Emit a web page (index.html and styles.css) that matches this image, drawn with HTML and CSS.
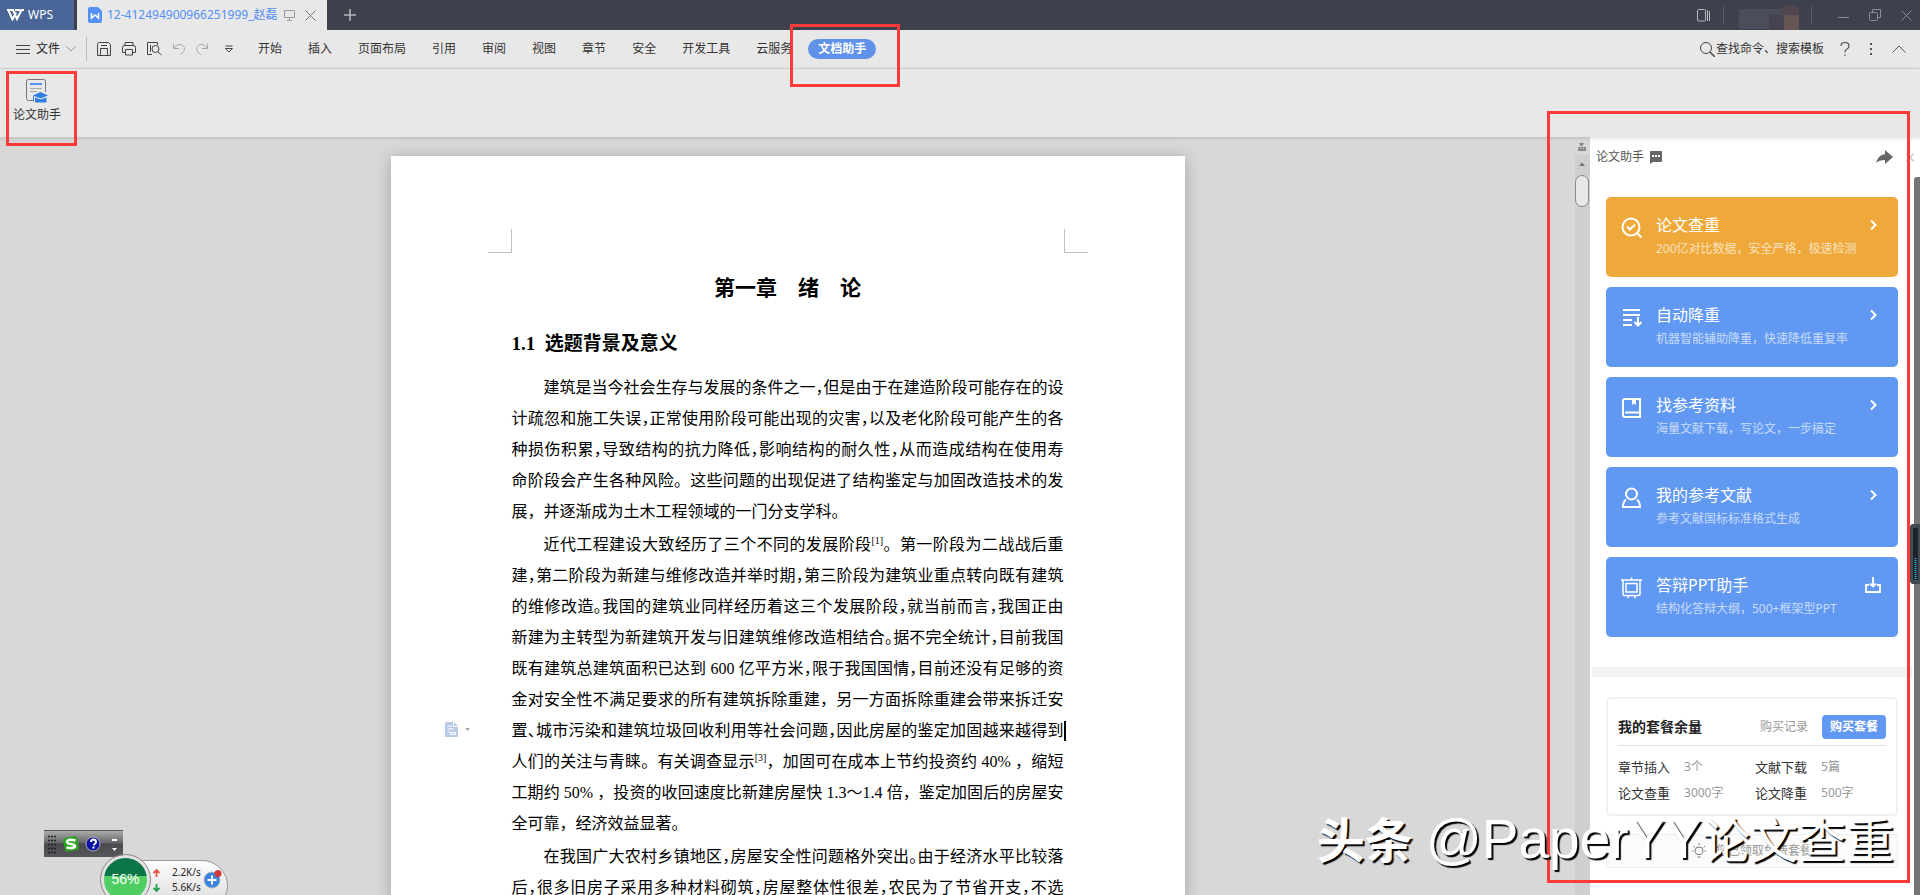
FILE: index.html
```html
<!DOCTYPE html>
<html lang="zh-CN">
<head>
<meta charset="utf-8">
<title>WPS 论文助手</title>
<link rel="stylesheet" href="styles.css">
</head>
<body>
<header class="titlebar">
  <button class="brand"><svg width="17" height="12" viewBox="0 0 17 12" fill="none" stroke="#fff" stroke-width="2"><path d="M0 1h6l4 9 4.500-9H17M1.500 1.500 5.500 10.500 9 3.500M8 1h5"/></svg>WPS</button>
  <div class="doctab">
    <svg width="14" height="16" viewBox="0 0 14 16"><path d="M2 0h8l4 4v10a2 2 0 0 1-2 2H2a2 2 0 0 1-2-2V2a2 2 0 0 1 2-2z" fill="#5490f5"/><path d="M3.500 6v5L7 8l3.500 3V6" fill="none" stroke="#fff" stroke-width="1.500"/></svg>
    <span class="docname">12-412494900966251999_赵磊</span>
    <svg class="monitor" width="11" height="12" viewBox="0 0 11 12" fill="none" stroke="#999"><path d="M.5 1.500h10v7H.5zM5.500 8.500v3M3 11.500h5"/></svg>
    <button class="icon" aria-label="关闭标签"><svg width="11" height="11" viewBox="0 0 11 11" stroke="#777"><path d="M.5.500l10 10M10.500.500l-10 10"/></svg></button>
  </div>
  <button class="icon newtab" aria-label="新建"><svg width="12" height="12" viewBox="0 0 12 12" stroke="#b5b7bd" stroke-width="1.500"><path d="M6 0v12M0 6h12"/></svg></button>
  <div class="window">
    <svg width="14" height="13" viewBox="0 0 14 13" fill="none" stroke="#b9bbc0"><rect x=".5" y=".5" width="8" height="11.500" rx="1"/><path d="M10.500 1v11M12.500 2v10"/></svg>
    <i class="sep"></i>
    <svg class="avatar" width="60" height="30" viewBox="0 0 60 30"><path d="M0 9h43v20H0z" fill="#4c4d5c"/><path d="M30 14h15v16H30z" fill="#474250"/><path d="M42 8q8-7 18 0v7H42z" fill="#51464e"/><path d="M45 15h15v15H45z" fill="#655653"/></svg>
    <i class="sep"></i>
    <button class="icon" aria-label="最小化"><svg width="11" height="12" viewBox="0 0 11 12" stroke="#8b8e97"><path d="M0 8.500h11"/></svg></button>
    <button class="icon" aria-label="还原"><svg width="12" height="12" viewBox="0 0 12 12" fill="none" stroke="#8b8e97"><rect x=".5" y="3.500" width="8" height="8" rx="1"/><path d="M3.500 3V.500h8v8H9"/></svg></button>
    <button class="icon" aria-label="关闭"><svg width="11" height="11" viewBox="0 0 11 11" stroke="#8b8e97"><path d="M.5.500l10 10M10.500.500l-10 10"/></svg></button>
  </div>
</header>

<nav class="menubar">
  <button class="file"><svg width="14" height="11" viewBox="0 0 14 11" stroke="#444"><path d="M0 1.500h14M0 5.500h14M0 9.500h14"/></svg>文件<svg width="10" height="6" viewBox="0 0 10 6" fill="none" stroke="#999"><path d="M.5.500 5 5 9.500.500"/></svg></button>
  <div class="quick">
    <button class="icon" aria-label="保存"><svg width="14" height="14" viewBox="0 0 14 14" fill="none" stroke="#444"><path d="M.5 2.500q0-2 2-2h9l2 2v11H.500zM3.500 13V6.500h7V13M4 3.500h6"/></svg></button>
    <button class="icon" aria-label="打印"><svg width="14" height="14" viewBox="0 0 14 14" fill="none" stroke="#444"><path d="M3 4V.500h8V4M3 10.500H.500V5.500q0-2 2-2h9q2 0 2 2v5H11M3.500 7.500h7v5.500h-7z"/></svg></button>
    <button class="icon" aria-label="打印预览"><svg width="15" height="14" viewBox="0 0 15 14" fill="none" stroke="#444"><path d="M5 12.500H.500v-12h10V3M3.500 3v7"/><circle cx="8.500" cy="7" r="3.500"/><path d="M11 10l3.500 3"/></svg></button>
    <button class="icon" aria-label="撤销"><svg width="12" height="12" viewBox="0 0 12 12" fill="none" stroke="#aaa"><path d="M.5.500v5H6M1 5q4-5 8-3t2 6q-1 2-4 3.500"/></svg></button>
    <button class="icon" aria-label="恢复"><svg width="12" height="12" viewBox="0 0 12 12" fill="none" stroke="#aaa"><path d="M11.500.500v5H6M11 5Q7 0 3 2T1 8q1 2 4 3.500"/></svg></button>
    <button class="icon more" aria-label="更多"><svg width="8" height="8" viewBox="0 0 8 8" fill="none" stroke="#444"><path d="M.5 1h7M.5 3.500 4 7l3.500-3.500z"/></svg></button>
  </div>
  <div class="tabs">
    <button>开始</button><button>插入</button><button>页面布局</button><button>引用</button><button>审阅</button><button>视图</button><button>章节</button><button>安全</button><button>开发工具</button><button class="cut">云服务</button><button class="active">文档助手</button>
  </div>
  <div class="tools">
    <button class="search"><svg width="15" height="15" viewBox="0 0 15 15" fill="none" stroke="#444"><circle cx="6" cy="6" r="5.500"/><path d="M10 10l5 5" stroke-width="1.500"/></svg>查找命令、搜索模板</button>
    <button class="icon" aria-label="帮助"><svg width="10" height="14" viewBox="0 0 10 14" fill="none" stroke="#555" stroke-width="1.200"><path d="M1 4q0-3.500 4-3.500T9 4q0 2-2 3T5 10.500M5 12.500V14"/></svg></button>
    <button class="icon" aria-label="选项"><svg width="2" height="12" viewBox="0 0 2 12" fill="#555"><path d="M0 0h2v2H0zM0 5h2v2H0zM0 10h2v2H0z"/></svg></button>
    <button class="icon" aria-label="收起"><svg width="14" height="8" viewBox="0 0 14 8" fill="none" stroke="#555"><path d="M.5 7.500 7 1l6.500 6.500"/></svg></button>
  </div>
</nav>

<section class="ribbon">
  <button class="paper"><svg width="22" height="24" viewBox="0 0 22 24" fill="none"><path d="M7 21.500H2.500q-2 0-2-2v-17q0-2 2-2h15q2 0 2 2V13" stroke="#777"/><path d="M4 5h12" stroke="#5490f5" stroke-width="2"/><path d="M4 9.500h12M4 12.500h7" stroke="#aaa"/><path d="M7 16.500 14.500 13l7.500 3.500-7.500 3zM9 18.500l5.500 2 6-2v5H9z" fill="#2f7fe0"/><path d="M7.500 16.500v6" stroke="#2f7fe0"/></svg>论文助手</button>
</section>

<main class="workspace">
  <div class="canvas">
    <article class="page">
      <div class="corners"><i class="corner left"></i><i class="corner right"></i></div>
      <div class="body">
        <h1>第一章　绪　论</h1>
        <h2>1.1&nbsp; 选题背景及意义</h2>
        <p>
          <span class="line first tight">建筑是当今社会生存与发展的条件之一，但是由于在建造阶段可能存在的设</span>
          <span class="line tight">计疏忽和施工失误，正常使用阶段可能出现的灾害，以及老化阶段可能产生的各</span>
          <span class="line tight">种损伤积累，导致结构的抗力降低，影响结构的耐久性，从而造成结构在使用寿</span>
          <span class="line">命阶段会产生各种风险。这些问题的出现促进了结构鉴定与加固改造技术的发</span>
          <span class="line last">展，并逐渐成为土木工程领域的一门分支学科。</span>
        </p>
        <p>
          <span class="line first">近代工程建设大致经历了三个不同的发展阶段<sup>[1]</sup>。第一阶段为二战战后重</span>
          <span class="line tight">建，第二阶段为新建与维修改造并举时期，第三阶段为建筑业重点转向既有建筑</span>
          <span class="line tight">的维修改造。我国的建筑业同样经历着这三个发展阶段，就当前而言，我国正由</span>
          <span class="line tight">新建为主转型为新建筑开发与旧建筑维修改造相结合。据不完全统计，目前我国</span>
          <span class="line tight">既有建筑总建筑面积已达到 600 亿平方米，限于我国国情，目前还没有足够的资</span>
          <span class="line">金对安全性不满足要求的所有建筑拆除重建，另一方面拆除重建会带来拆迁安</span>
          <span class="line tight current"><svg class="pastemark" width="26" height="15" viewBox="0 0 26 15"><path d="M0 0h9l4 4v11H0z" fill="#b7cbe8"/><path d="M8.500 0v4.500H13M2.500 4h4M2.500 7h6M2.500 10h3M5.500 10.500h5v2h-5z" fill="none" stroke="#fff"/><path d="M20 6h5l-2.500 3z" fill="#aaa"/></svg>置、城市污染和建筑垃圾回收利用等社会问题，因此房屋的鉴定加固越来越得到<i class="caret"></i></span>
          <span class="line">人们的关注与青睐。有关调查显示<sup>[3]</sup>，加固可在成本上节约投资约 40% ，缩短</span>
          <span class="line">工期约 50% ，投资的收回速度比新建房屋快 1.3～1.4 倍，鉴定加固后的房屋安</span>
          <span class="line last">全可靠，经济效益显著。</span>
        </p>
        <p>
          <span class="line first tight">在我国广大农村乡镇地区，房屋安全性问题格外突出。由于经济水平比较落</span>
          <span class="line tight">后，很多旧房子采用多种材料砌筑，房屋整体性很差，农民为了节省开支，不选</span>
        </p>
      </div>
    </article>
  </div>

  <div class="scrollbar">
    <svg class="split" width="15" height="18" viewBox="0 0 15 18" fill="#888"><path d="M4 6h5L7.500 9h-2zM3 10h8v4H3z"/><path d="M5.500 11v1M8.500 11v1" stroke="#ddd"/></svg>
    <svg width="15" height="18" viewBox="0 0 15 18" fill="#777"><path d="M4 11h6L7 7.500z"/></svg>
    <i class="thumb"></i>
  </div>

  <aside class="panel">
    <div class="panelhead">
      <span>论文助手</span>
      <svg width="12" height="13" viewBox="0 0 12 13"><path d="M1 0h10q1 0 1 1v9q0 1-1 1H3l-3 2V1q0-1 1-1z" fill="#666"/><path d="M2 4h2v2H2zM5 4h2v2H5zM8 4h2v2H8z" fill="#fff"/></svg>
      <button class="icon share" aria-label="分享"><svg width="17" height="15" viewBox="0 0 17 15" fill="#666"><path d="M9 0l8 7-8 7v-4q-6 0-9 3Q2 5 9 4z"/></svg></button>
      <button class="icon" aria-label="关闭面板"><svg width="8" height="9" viewBox="0 0 8 9" stroke="#999"><path d="M0 .500l8 8M8 .500l-8 8"/></svg></button>
    </div>
    <div class="panelbody">
      <div class="content">
        <div class="cards">
          <button class="card gold">
            <svg class="lead" width="22" height="24" viewBox="0 0 22 24" fill="none" stroke="#fff" stroke-width="2"><circle cx="10" cy="11" r="8.500"/><path d="M16 17l4.500 4.500M6 10.500l3 3 5-5"/></svg>
            <span class="text"><b>论文查重</b><small>200亿对比数据，安全严格，极速检测</small></span>
            <svg class="go" width="16" height="16" viewBox="0 0 16 16" fill="none" stroke="#fff" stroke-width="2"><path d="M6 3.500l4.500 4.500L6 12.500"/></svg>
          </button>
          <button class="card">
            <svg class="lead" width="22" height="24" viewBox="0 0 22 24" fill="none" stroke="#fff" stroke-width="2"><path d="M2 4h17M2 9h17M2 14h9M2 19h9M17 11v8M13.500 16l3.500 3.500 3.500-3.500"/></svg>
            <span class="text"><b>自动降重</b><small>机器智能辅助降重，快速降低重复率</small></span>
            <svg class="go" width="16" height="16" viewBox="0 0 16 16" fill="none" stroke="#fff" stroke-width="2"><path d="M6 3.500l4.500 4.500L6 12.500"/></svg>
          </button>
          <button class="card">
            <svg class="lead" width="22" height="24" viewBox="0 0 22 24" fill="none" stroke="#fff" stroke-width="2"><path d="M19 16.500V3H4Q2 3 2 5v14q0 2 2 2h15v-4.500H4"/><path d="M11 3h4v6l-2-1.500L11 9z" fill="#fff" stroke="none"/></svg>
            <span class="text"><b>找参考资料</b><small>海量文献下载，写论文，一步搞定</small></span>
            <svg class="go" width="16" height="16" viewBox="0 0 16 16" fill="none" stroke="#fff" stroke-width="2"><path d="M6 3.500l4.500 4.500L6 12.500"/></svg>
          </button>
          <button class="card">
            <svg class="lead" width="22" height="24" viewBox="0 0 22 24" fill="none" stroke="#fff" stroke-width="2"><circle cx="10.500" cy="8" r="5.500"/><path d="M5 13.500Q2 16 2 21h17q0-5-3-7.500"/></svg>
            <span class="text"><b>我的参考文献</b><small>参考文献国标标准格式生成</small></span>
            <svg class="go" width="16" height="16" viewBox="0 0 16 16" fill="none" stroke="#fff" stroke-width="2"><path d="M6 3.500l4.500 4.500L6 12.500"/></svg>
          </button>
          <button class="card">
            <svg class="lead" width="22" height="24" viewBox="0 0 22 24" fill="none" stroke="#fff" stroke-width="1.500"><path d="M0 4h21M10.500 1.500V4M2 4v14q0 1.500 1.500 1.500h14q1.500 0 1.500-1.500V4M5 7.500h11V16H5zM8 19.500l-1.500 2.500M13 19.500l1.500 2.500"/></svg>
            <span class="text"><b>答辩PPT助手</b><small>结构化答辩大纲，500+框架型PPT</small></span>
            <svg class="go" width="16" height="16" viewBox="0 0 16 16" fill="none" stroke="#fff" stroke-width="1.800"><path d="M4 8H1v7h14V8h-3M8 0v9M5 6.500 8 9.500l3-3"/></svg>
          </button>
        </div>
        <div class="band"></div>
        <section class="plan">
          <div class="planhead"><h3>我的套餐余量</h3><a class="record" href="#">购买记录</a><button class="buy">购买套餐</button></div>
          <dl class="quota">
            <div><dt>章节插入</dt><dd>3个</dd></div><div><dt>文献下载</dt><dd>5篇</dd></div>
            <div><dt>论文查重</dt><dd>3000字</dd></div><div><dt>论文降重</dt><dd>500字</dd></div>
          </dl>
        </section>
        <div class="notice"><svg width="14" height="16" viewBox="0 0 14 16" fill="none" stroke="#777"><path d="M5 11.500Q3 10 3 7.500 3 4 7 4t4 3.500q0 2.500-2 4zM5.500 14h3M7 0v2M1 3l1.500 1.500M13 3l-1.500 1.500M0 8h1.500M12.500 8H14"/></svg>您已领取免费套餐</div>
      </div>
      <i class="panelscroll"></i>
    </div>
  </aside>
</main>

<div class="ime">
  <svg width="79" height="26" viewBox="0 0 79 26"><g stroke="#222" stroke-width="1.500" stroke-dasharray="2 1"><path d="M4 5.500h8M4 9.500h8M4 13.500h8M4 17.500h8M4 21.500h8"/></g><rect x="20" y="6" width="14" height="14" rx="2" fill="#2aa31c" transform="rotate(-10 27 13)"/><path d="M31.500 9.500q-8-2-8.500 1 0 2 4 2.500t4 2.500q-1 2.500-8.500 1" fill="none" stroke="#fff" stroke-width="2.500"/><circle cx="49" cy="13" r="7" fill="#0a10a8" stroke="#aab"/><path d="M47 11q0-2.500 2.500-2.500T52 11q0 1.500-2.500 3M49.500 15.500v2" fill="none" stroke="#fff" stroke-width="2"/><path d="M68 8h5v2h-5zM68 17h5l-2.500 3z" fill="#fff"/></svg>
</div>
<div class="netball">
  <div class="rates">
    <span><svg width="7" height="8" viewBox="0 0 7 8" fill="none" stroke="#e2573e" stroke-width="1.800"><path d="M3.500 8V1M.5 4l3-3 3 3"/></svg>2.2K/s</span>
    <span><svg width="7" height="8" viewBox="0 0 7 8" fill="none" stroke="#2b9a55" stroke-width="1.800"><path d="M3.500 0v7M.5 4l3 3 3-3"/></svg>5.6K/s</span>
  </div>
  <svg class="boost" width="19" height="20" viewBox="0 0 19 20"><circle cx="9" cy="11" r="8" fill="#3b84dc" stroke="#a9b7c8"/><path d="M9 6.500v9M4.500 11h9" stroke="#fff" stroke-width="2"/><circle cx="15" cy="4.500" r="3.500" fill="#d33a37"/></svg>
  <div class="ball">56%</div>
</div>
<svg class="meter" width="10" height="60" viewBox="0 0 10 60"><path d="M2 0h8v60H2L0 58V2z" fill="#434b54"/><path d="M3 4h5v52H3z" fill="#1d2229"/><path d="M5.500 34v22" stroke="#2cb3ea" stroke-width="2" stroke-dasharray="1 1"/></svg>

<i class="mark mark-tool"></i>
<i class="mark mark-tab"></i>
<i class="mark mark-panel"></i>
<div class="watermark"><b>头条</b> <span>@PaperYY</span>论文查重</div>
</body>
</html>
```
FILE: styles.css
```css
* { box-sizing: border-box; }
body {
  margin: 0;
  height: 100vh;
  overflow: hidden;
  position: relative;
  display: flex;
  flex-direction: column;
  background: #d8d8d8;
  color: #333;
  font: 12px/18px "Noto Sans", "Noto Sans CJK SC", sans-serif;
}
button { margin: 0; padding: 0; border: 0; background: none; color: inherit; font: inherit; cursor: pointer; }
svg { display: block; flex: none; }
.icon { display: flex; align-items: center; }

/* Title bar */
.titlebar { display: flex; flex: none; height: 30px; background: #3d414d; }
.brand { display: flex; align-items: center; gap: 4px; width: 74px; padding-left: 7px; margin-right: 3px; background: #4a6699; color: #fff; font-size: 12px; }
.doctab { display: flex; align-items: center; width: 250px; padding: 0 10px 0 11px; background: #e8e8e8; }
.docname { margin-left: 5px; color: #5490f5; white-space: nowrap; }
.monitor { margin: 0 10px 0 7px; }
.newtab { margin-left: 17px; }
.window { display: flex; align-items: center; margin-left: auto; padding-right: 8px; gap: 20px; }
.sep { width: 1px; height: 18px; background: #5b5e68; }
.window .sep { margin: 0 4px 0 -8px; }
.window .avatar + .sep { margin: 0 6px 0 -8px; }
.avatar { margin-left: -9px; }

/* Menu bar */
.menubar { display: flex; flex: none; align-items: center; height: 39px; border-bottom: 1px solid #d4d4d4; background: #e8e8e8; }
.file { display: flex; align-items: center; gap: 6px; padding: 0 10px 0 16px; height: 24px; border-right: 1px solid #bbb; color: #222; }
.quick { display: flex; align-items: center; gap: 11px; padding: 0 12px 0 10px; }
.more { margin: 0 0 0 6px; }
.tabs { display: flex; align-items: center; }
.tabs button { padding: 0 13px; line-height: 20px; white-space: nowrap; }
.tabs .cut { padding-right: 16px; }
.tabs .active { padding: 0 10px; border-radius: 10px; background: #5f92e8; color: #fff; font-weight: 700; }
.tools { display: flex; align-items: center; gap: 20px; margin-left: auto; padding-right: 14px; }
.search { display: flex; align-items: center; gap: 1px; margin-right: -4px; }

/* Ribbon */
.ribbon { flex: none; height: 68px; padding: 10px 13px; background: #e8e8e8; box-shadow: 0 1px 4px rgba(0, 0, 0, .15); z-index: 1; }
.paper { display: flex; flex-direction: column; align-items: center; gap: 3px; }

/* Workspace */
.workspace { display: flex; flex: 1; min-height: 0; }
.canvas { flex: 1; min-width: 0; overflow: hidden; padding-top: 19px; }
.page { max-width: 794px; min-height: 100%; margin: 0 auto; padding: 73px 97px 0; background: #fff; box-shadow: 0 2px 14px rgba(0, 0, 0, .25); }
.corners { display: flex; justify-content: space-between; }
.corner { width: 24px; height: 24px; border: 0 solid #c0c0c0; border-bottom-width: 1px; }
.corner.left { border-right-width: 1px; }
.corner.right { border-left-width: 1px; }
.body { padding: 0 24px; color: #000; font: 16px/31px "Liberation Serif", "Noto Sans CJK SC", serif; }
.body h1 { margin: 15px 0 0; font-size: 21px; line-height: 40px; text-align: center; }
.body h2 { margin: 16px 0 8px; font-size: 19px; line-height: 40px; }
.body p { margin: 0 0 2px; }
.line { display: block; height: 31px; white-space: nowrap; text-align: justify; text-align-last: justify; }
.first { padding-left: 32px; }
.last { text-align-last: left; }
.tight { font-feature-settings: "halt"; }
.current { position: relative; }
.pastemark { position: absolute; left: -67px; top: 7px; }
.caret { position: absolute; right: -2px; top: 6px; width: 2px; height: 20px; background: #000; }
sup { font-size: 10px; line-height: 10px; }

.scrollbar { display: flex; flex-direction: column; width: 15px; background: #cfcfcf; }
.split { background: #d8d8d8; }
.thumb { width: 14px; height: 32px; margin-top: 2px; border: 1px solid #888; border-radius: 7px; background: #e8e8e8; }

/* Side panel */
.panel { display: flex; flex-direction: column; width: 330px; background: #fff; }
.panelhead { display: flex; flex: none; align-items: center; gap: 6px; height: 40px; padding: 0 6px; color: #555; }
.share { margin: 0 7px 0 auto; }
.panelbody { display: flex; flex: 1; min-height: 0; }
.content { flex: 1; padding: 20px 2px 0; overflow: hidden; }
.panelscroll { width: 6px; border-radius: 3px 0 0; background: #757575; }
.cards { display: grid; gap: 10px; padding: 0 14px 30px; }
.card { display: flex; align-items: flex-start; height: 80px; padding: 17px 17px 0 15px; border-radius: 5px; background: #6098f2; color: #fff; text-align: left; }
.card.gold { background: #efa93a; }
.lead { margin-top: 2px; }
.text { flex: 1; margin-left: 13px; }
.text b { display: block; font-size: 16px; line-height: 22px; font-weight: 400; }
.text small { display: block; margin-top: 4px; font-size: 12px; line-height: 18px; opacity: .65; }
.go { margin-top: 3px; }
.band { height: 10px; background: #f4f4f4; }
.plan { margin: 20px 14px 18px; padding: 16px 10px 8px; border: 2px solid #f1f1f1; border-radius: 5px; }
.planhead { display: flex; align-items: center; height: 31px; padding-bottom: 6px; border-bottom: 1px solid #e2e2e2; }
.planhead h3 { margin: 0 auto 0 0; color: #222; font-size: 14px; font-weight: 700; }
.record { color: #999; text-decoration: none; }
.buy { width: 64px; height: 24px; margin-left: 14px; border-radius: 4px; background: #6098f2; color: #fff; font-weight: 700; }
.quota { display: grid; grid-template-columns: 137px 1fr; margin: 8px 0 0; line-height: 26px; }
.quota div { display: flex; gap: 14px; }
.quota dt { color: #333; font-size: 13px; }
.quota dd { margin: 0; color: #999; }
.notice { display: flex; align-items: center; justify-content: center; gap: 10px; height: 34px; margin: 0 14px; border: 1px solid #eee; background: #fbfbfb; color: #999; }

/* Floating desktop widgets */
.ime { position: absolute; left: 44px; bottom: 38px; border-top: 1px solid #555; background: linear-gradient(#aaa, #66686b 45%, #494b4e 50%, #55575a); }
.netball { position: absolute; left: 110px; bottom: -17px; display: flex; width: 118px; height: 52px; padding: 4px 5px 0 42px; border: 1px solid #999; border-radius: 26px; background: linear-gradient(#fdfdfd, #d8d8d8); color: #222; }
.rates { display: flex; flex: 1; flex-direction: column; }
.rates span { display: flex; align-items: center; gap: 12px; line-height: 15px; font-size: 10px; }
.boost { margin-top: 4px; }
.ball { position: absolute; left: -10px; top: -6px; width: 49px; height: 49px; border: 3px solid #e2e2e2; border-radius: 50%; outline: 1px solid #888; background: linear-gradient(#0b7548 42%, #4fce63 42%); color: #fff; font: 14px/42px "Liberation Sans", sans-serif; text-align: center; }
.meter { position: absolute; right: 0; top: 524px; }

/* Highlight frames and watermark */
.mark { position: absolute; border: 3px solid #fc3a37; z-index: 2; }
.mark-tool { left: 6px; top: 71px; width: 71px; height: 75px; }
.mark-tab { left: 790px; top: 24px; width: 110px; height: 63px; }
.mark-panel { right: 10px; top: 111px; width: 363px; height: 772px; }
.watermark { position: absolute; right: 26px; bottom: 18px; z-index: 3; color: #fff; font: 48px/70px "Liberation Sans", "Noto Sans CJK SC", sans-serif; white-space: nowrap; text-shadow: 2px 2px 1px #000; }
.watermark span { font-size: 55px; }
```
